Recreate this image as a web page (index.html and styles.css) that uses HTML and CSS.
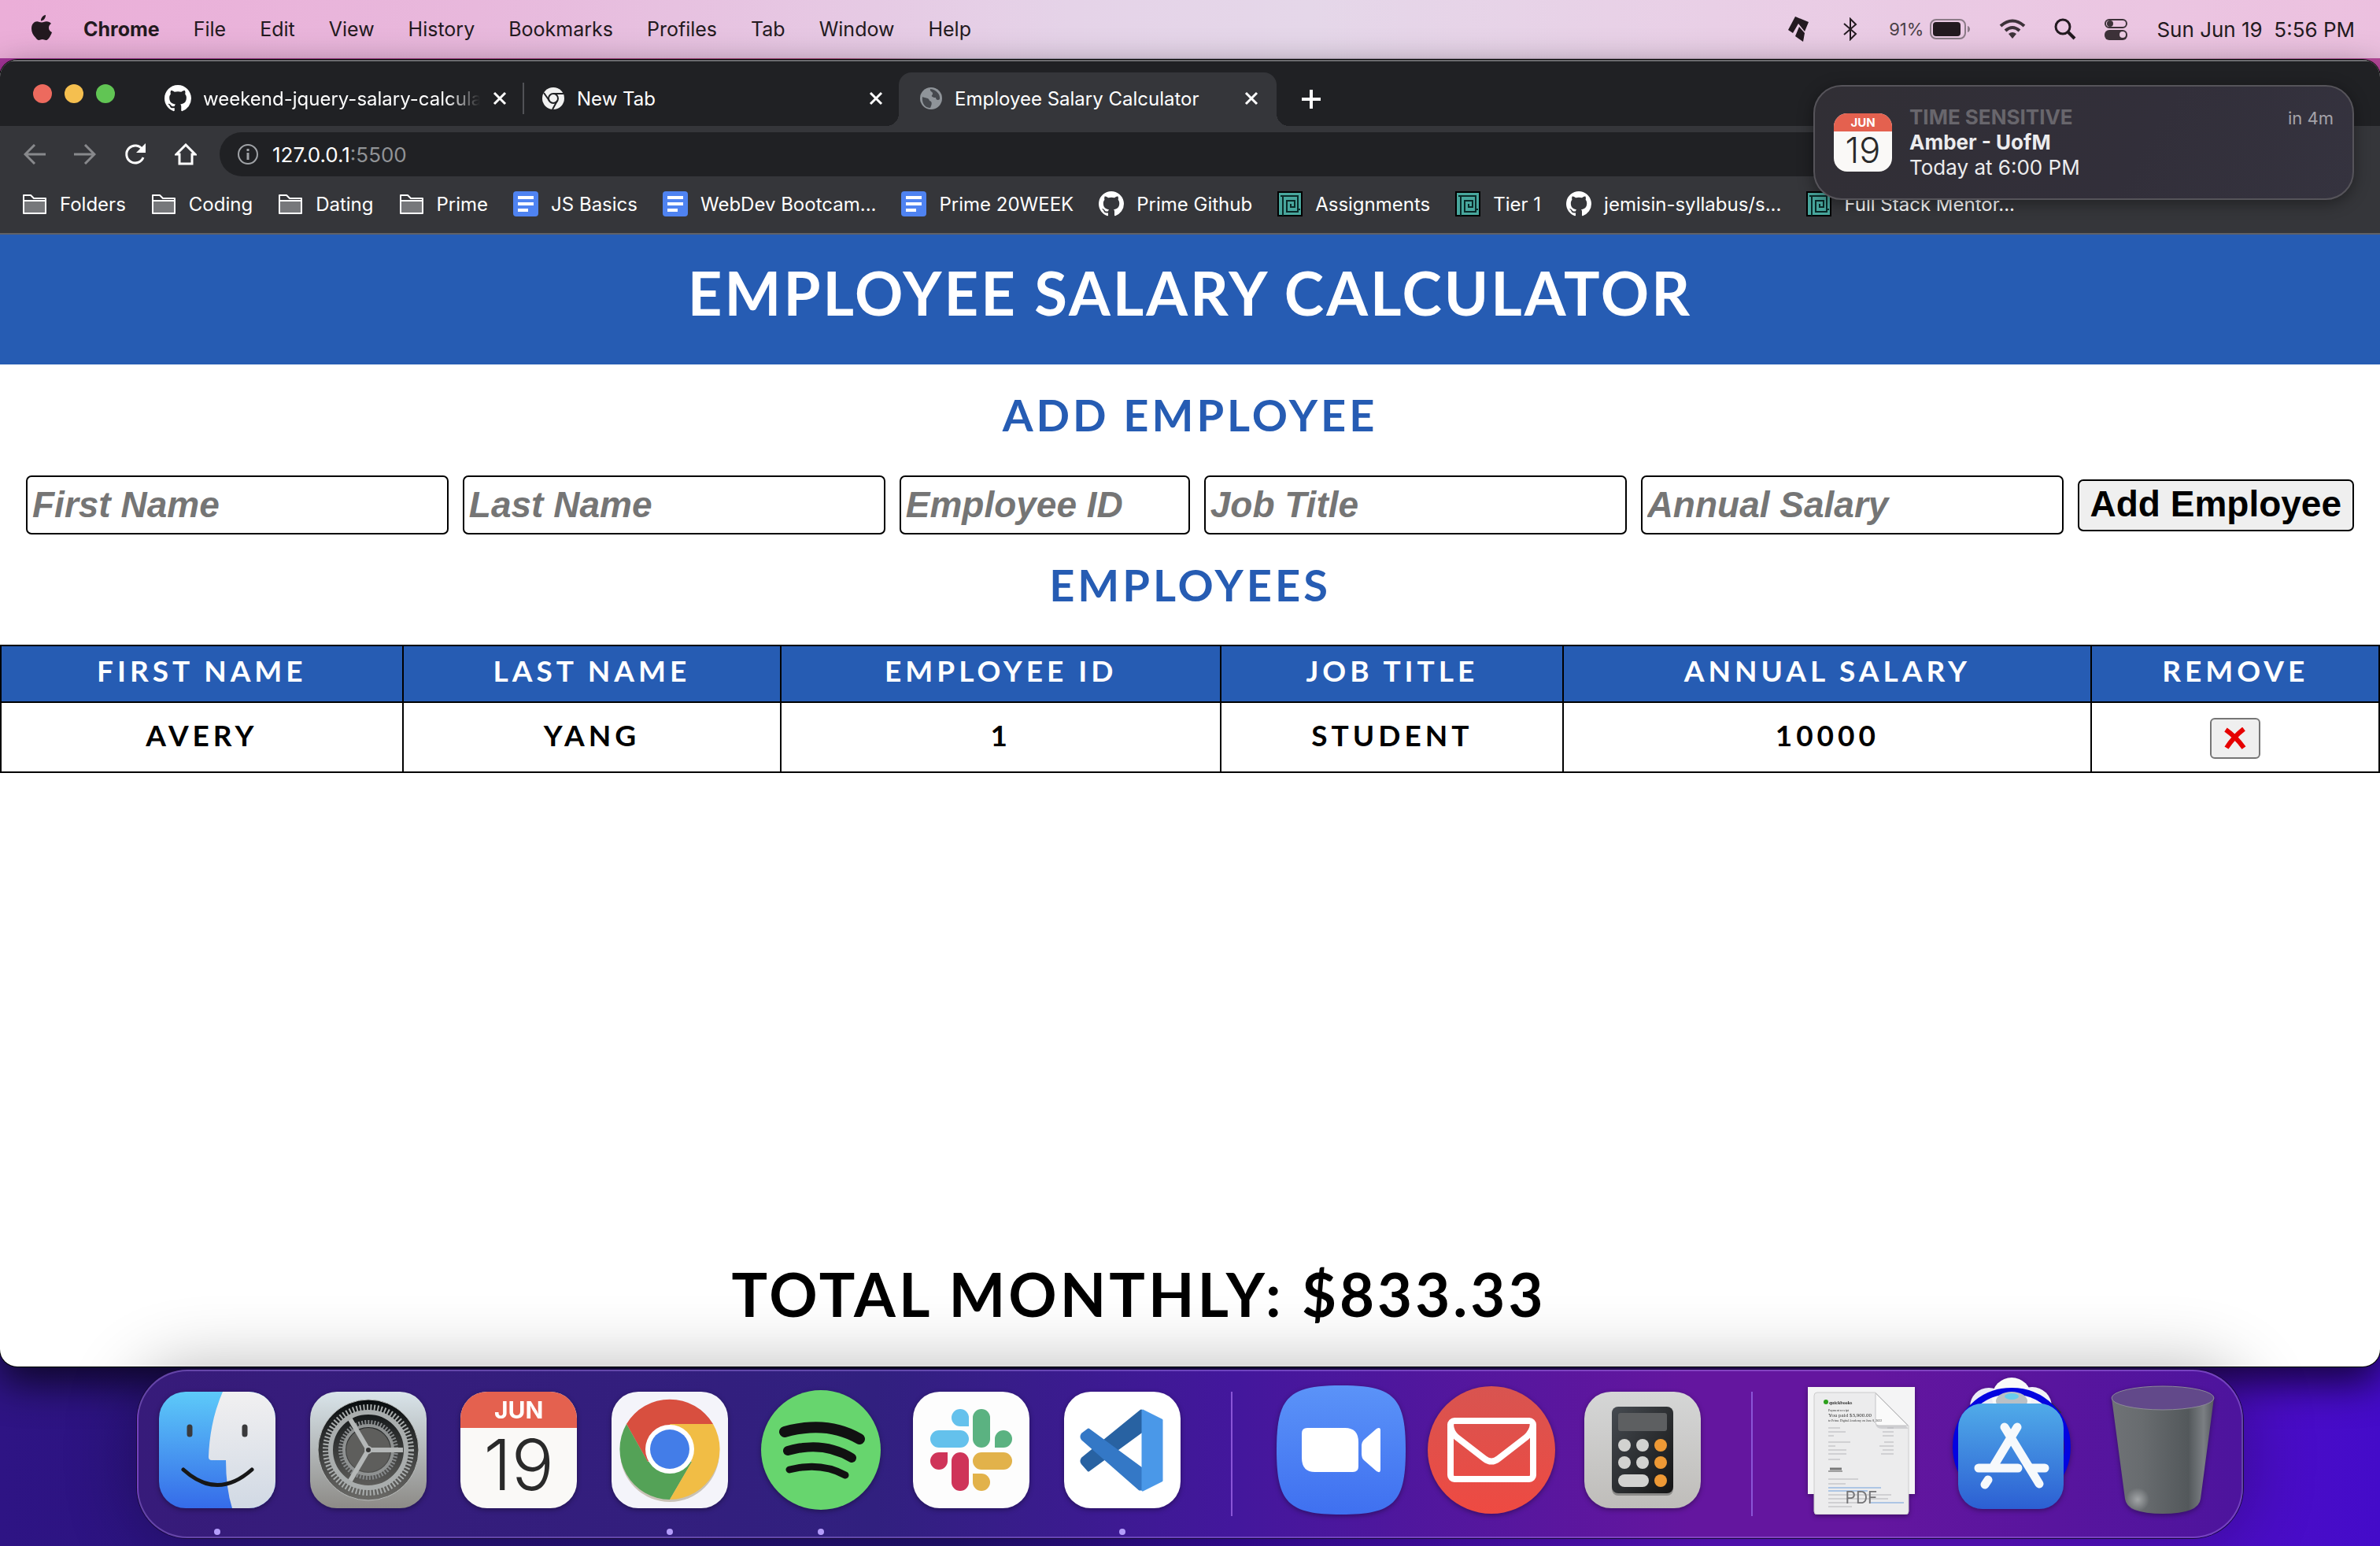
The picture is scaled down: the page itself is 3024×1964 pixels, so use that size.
FILE: index.html
```html
<!DOCTYPE html>
<html lang="en">
<head>
<meta charset="utf-8">
<title>Employee Salary Calculator</title>
<link rel="stylesheet" href="styles.css">
</head>
<body>
<svg class="defs" aria-hidden="true">
  <symbol id="github" viewBox="0 0 16 16"><path fill="#fff" d="M8 0C3.58 0 0 3.58 0 8c0 3.54 2.29 6.53 5.47 7.59.4.07.55-.17.55-.38 0-.19-.01-.82-.01-1.49-2.01.37-2.53-.49-2.69-.94-.09-.23-.48-.94-.82-1.13-.28-.15-.68-.52-.01-.53.63-.01 1.08.58 1.23.82.72 1.21 1.87.87 2.33.66.07-.52.28-.87.51-1.07-1.78-.2-3.64-.89-3.64-3.95 0-.87.31-1.59.82-2.15-.08-.2-.36-1.02.08-2.12 0 0 .67-.21 2.2.82.64-.18 1.32-.27 2-.27s1.36.09 2 .27c1.53-1.04 2.2-.82 2.2-.82.44 1.1.16 1.92.08 2.12.51.56.82 1.27.82 2.15 0 3.07-1.87 3.75-3.65 3.95.29.25.54.73.54 1.48 0 1.07-.01 1.93-.01 2.2 0 .21.15.46.55.38A8.01 8.01 0 0 0 16 8c0-4.42-3.58-8-8-8z"/></symbol>
  <symbol id="folder" viewBox="0 0 32 32"><path d="M2 5h9l4 4h15v19H2z" fill="#35363a" stroke="#fff" stroke-width="2" stroke-linejoin="round"/><path d="M3 12h26v15H3z" fill="#77787b"/><path d="M2 12h28" stroke="#fff" stroke-width="2"/></symbol>
  <symbol id="doc" viewBox="0 0 32 32"><rect width="32" height="32" rx="4" fill="#4f83f1"/><path d="M6 8h20M6 16h20M6 24h13" stroke="#fff" stroke-width="4"/></symbol>
  <symbol id="maze" viewBox="0 0 32 32"><rect x="1" y="1" width="30" height="30" fill="#48a79d" stroke="#000" stroke-width="2"/><path d="M7 31V6h19v20H12V12h10v8h-5v-4M4 6h3M26 23h3" fill="none" stroke="#0a2a28" stroke-width="2"/></symbol>
  <symbol id="close" viewBox="0 0 18 18"><path d="M2 2l14 14M16 2L2 16" stroke="#fff" stroke-width="3"/></symbol>
</svg>

<header class="menubar">
  <svg class="apple" viewBox="0 0 26 32"><path fill="#231a20" d="M18 0c.2 2-.6 3.900-1.700 5.300-1.200 1.400-2.700 2.300-4.300 2.200-.2-2 .7-3.900 1.700-5.100C14.900 1 16.600.1 18 0zM25 11c-1.900 1.200-3 2.900-3 5.300 0 2.700 1.500 4.700 4 5.600-.9 2.700-2.100 5.100-3.900 7.500-1.100 1.500-2.200 2.600-3.900 2.600-1.600 0-2.200-1-4.400-1-2.100 0-2.900 1-4.400 1-1.700 0-3-1.500-4.200-3.200C1.500 25.500-.4 20.500.1 15.800.5 11.400 3.500 8.300 7.100 8.200c2 0 3.700 1.300 6 1.300 1.500 0 3.400-1.400 6.200-1.300 2.200.1 4.300 1 5.700 2.800z"/></svg>
  <nav class="menus">
    <strong>Chrome</strong><span>File</span><span>Edit</span><span>View</span><span>History</span><span>Bookmarks</span><span>Profiles</span><span>Tab</span><span>Window</span><span>Help</span>
  </nav>
  <div class="status">
    <svg width="26" height="32" viewBox="0 0 26 32" fill="#231a20"><path d="M9 0l17 7-5 12-8-10-7 12-6-4z"/><path d="M14 13l7 8-2 11-10-7z"/></svg>
    <svg class="bluetooth" width="18" height="30" viewBox="0 0 18 30" fill="none" stroke="#231a20" stroke-width="2"><path d="M1 8l15 13-7 7V2l7 7L1 22"/></svg>
    <span class="battery"><small>91%</small>
      <svg width="52" height="26" viewBox="0 0 52 26"><rect x="1" y="1" width="44" height="24" rx="7" fill="none" stroke="#8c7b88" stroke-width="2"/><rect x="4" y="4" width="35" height="18" rx="4" fill="#231a20"/><path d="M48 9c4 1 4 7 0 8z" fill="#8c7b88"/></svg></span>
    <svg width="34" height="26" viewBox="0 0 34 26" fill="none" stroke="#3d3239" stroke-width="4"><path d="M2 9q15-13 30 0M8 15q9-8 18 0"/><path d="M17 25l-5-6q5-4 10 0z" fill="#3d3239" stroke="none"/></svg>
    <svg width="28" height="28" viewBox="0 0 28 28" fill="none" stroke="#231a20" stroke-width="3"><circle cx="11" cy="11" r="9"/><path d="M18 18l8 8" stroke-width="4"/></svg>
    <svg width="30" height="28" viewBox="0 0 30 28"><rect x="1" y="2" width="27" height="10" rx="5" fill="none" stroke="#3d3239" stroke-width="2"/><circle cx="7" cy="7" r="4" fill="#3d3239"/><rect y="15" width="29" height="13" rx="6" fill="#3d3239"/><circle cx="23" cy="21" r="4" fill="#ebcbe2"/></svg>
    <time>Sun Jun 19&nbsp; 5:56 PM</time>
  </div>
</header>

<main class="window">
  <div class="tabs">
    <div class="lights"><i class="red"></i><i class="amber"></i><i class="green"></i></div>
    <div class="tab tab-first">
      <svg width="34" height="34"><use href="#github"/></svg>
      <span class="tab-title fade">weekend-jquery-salary-calcula</span>
      <button class="plain" aria-label="Close"><svg width="18" height="18"><use href="#close"/></svg></button>
    </div>
    <div class="tab tab-second">
      <svg width="30" height="30" viewBox="0 0 30 30"><circle cx="15" cy="15" r="14" fill="#f1f1f1"/><g fill="none" stroke="#202124" stroke-width="2"><circle cx="15" cy="15" r="6"/><path d="M15 9h13M10 18L3 8M20 18l-6 11"/></g></svg>
      <span class="tab-title">New Tab</span>
      <button class="plain" aria-label="Close"><svg width="18" height="18"><use href="#close"/></svg></button>
    </div>
    <div class="tab active">
      <svg width="30" height="30" viewBox="0 0 30 30"><circle cx="15" cy="15" r="14" fill="#8f9499"/><path d="M4 13c5 2 8 1 9 5 4 1 3 5 1 9C7 27 3 21 4 13zM14 3c-1 4 4 3 3 7-3 2 0 4 4 4 0 3 3 4 5 2 1-6-4-12-12-13z" fill="#45484d"/></svg>
      <span class="tab-title">Employee Salary Calculator</span>
      <button class="plain" aria-label="Close"><svg width="18" height="18"><use href="#close"/></svg></button>
    </div>
    <button class="plain new-tab" aria-label="New tab"><svg width="24" height="24" viewBox="0 0 24 24"><path d="M12 0v24M0 12h24" stroke="#fff" stroke-width="4"/></svg></button>
  </div>

  <div class="toolbar">
    <button class="plain" aria-label="Back"><svg width="28" height="26" viewBox="0 0 28 26" fill="none" stroke="#88898c" stroke-width="3"><path d="M28 13H3M14 1L2 13l12 12"/></svg></button>
    <button class="plain" aria-label="Forward"><svg width="28" height="26" viewBox="0 0 28 26" fill="none" stroke="#88898c" stroke-width="3"><path d="M0 13h25M14 1l12 12-12 12"/></svg></button>
    <button class="plain" aria-label="Reload"><svg width="28" height="28" viewBox="0 0 28 28"><path d="M24 18a11 11 0 1 1-1-10" fill="none" stroke="#fff" stroke-width="3"/><path d="M27 0v12H15z" fill="#fff"/></svg></button>
    <button class="plain" aria-label="Home"><svg width="28" height="28" viewBox="0 0 28 28"><path d="M6 26V14H2L14 2l12 12h-4v12z" fill="none" stroke="#fff" stroke-width="3"/></svg></button>
    <div class="address">
      <svg width="28" height="28" viewBox="0 0 28 28" fill="none" stroke="#a0a3a7" stroke-width="2"><circle cx="14" cy="14" r="12"/><path d="M14 12v9M14 7v3" stroke-width="3"/></svg>
      <span class="url">127.0.0.1<span>:5500</span></span>
    </div>
  </div>

  <nav class="bookmarks">
    <a href="#"><svg><use href="#folder"/></svg>Folders</a>
    <a href="#"><svg><use href="#folder"/></svg>Coding</a>
    <a href="#"><svg><use href="#folder"/></svg>Dating</a>
    <a href="#"><svg><use href="#folder"/></svg>Prime</a>
    <a href="#"><svg><use href="#doc"/></svg>JS Basics</a>
    <a href="#"><svg><use href="#doc"/></svg>WebDev Bootcam...</a>
    <a href="#"><svg><use href="#doc"/></svg>Prime 20WEEK</a>
    <a href="#"><svg><use href="#github"/></svg>Prime Github</a>
    <a href="#"><svg><use href="#maze"/></svg>Assignments</a>
    <a href="#"><svg><use href="#maze"/></svg>Tier 1</a>
    <a href="#"><svg><use href="#github"/></svg>jemisin-syllabus/s...</a>
    <a href="#"><svg><use href="#maze"/></svg>Full Stack Mentor...</a>
  </nav>

  <section class="page">
    <h1>EMPLOYEE SALARY CALCULATOR</h1>
    <h2>ADD EMPLOYEE</h2>
    <form class="employee-form">
      <input type="text" placeholder="First Name" aria-label="First Name">
      <input type="text" placeholder="Last Name" aria-label="Last Name">
      <input class="short" type="text" placeholder="Employee ID" aria-label="Employee ID">
      <input type="text" placeholder="Job Title" aria-label="Job Title">
      <input type="text" placeholder="Annual Salary" aria-label="Annual Salary">
      <button type="button">Add Employee</button>
    </form>
    <h2>EMPLOYEES</h2>
    <table>
      <colgroup><col class="c1"><col class="c2"><col class="c3"><col class="c4"><col class="c5"><col class="c6"></colgroup>
      <thead><tr><th>FIRST NAME</th><th>LAST NAME</th><th>EMPLOYEE ID</th><th>JOB TITLE</th><th>ANNUAL SALARY</th><th>REMOVE</th></tr></thead>
      <tbody><tr><td>AVERY</td><td>YANG</td><td>1</td><td>STUDENT</td><td>10000</td>
        <td><button type="button" class="remove" aria-label="Remove"><svg width="28" height="28" viewBox="0 0 28 28"><path d="M2 3q13 9 23 23M25 2Q12 12 3 26" fill="none" stroke="#e60000" stroke-width="6"/></svg></button></td></tr></tbody>
    </table>
    <p class="total">TOTAL MONTHLY: $833.33</p>
  </section>

  <aside class="notice">
    <div class="calendar small"><b>JUN</b><span>19</span></div>
    <div class="notice-text">
      <b class="muted">TIME SENSITIVE</b>
      <b>Amber - UofM</b>
      <span>Today at 6:00 PM</span>
    </div>
    <span class="when">in 4m</span>
  </aside>
</main>

<footer class="dock">
  <div class="app running"><svg width="148" height="148" viewBox="0 0 148 148">
    <defs><linearGradient id="fb" x2="0" y2="1"><stop stop-color="#5dcaf9"/><stop offset="1" stop-color="#356be9"/></linearGradient><linearGradient id="fw" x2="0" y2="1"><stop stop-color="#f1f0f1"/><stop offset="1" stop-color="#d1d9e4"/></linearGradient><clipPath id="fc"><rect width="148" height="148" rx="34"/></clipPath></defs>
    <g clip-path="url(#fc)"><rect width="148" height="148" fill="url(#fb)"/><path d="M81 0C68 30 64 58 63 83q0 4 4 4h18q0 36 8 61h55V0z" fill="url(#fw)"/></g>
    <path d="M39 45v9M109 45v9" stroke="#3a3a3c" stroke-width="7" stroke-linecap="round"/><path d="M31 99q43 39 87 0" fill="none" stroke="#171717" stroke-width="5" stroke-linecap="round"/></svg></div>

  <div class="app"><svg width="148" height="148" viewBox="0 0 148 148">
    <defs><linearGradient id="sg" x2="0" y2="1"><stop stop-color="#d9e4ea"/><stop offset="1" stop-color="#8d8b87"/></linearGradient><linearGradient id="sd" x2="0" y2="1"><stop stop-color="#070b0d"/><stop offset="1" stop-color="#6b6a67"/></linearGradient></defs>
    <rect width="148" height="148" rx="34" fill="url(#sg)"/><circle cx="74" cy="74" r="64" fill="url(#sd)" stroke="#b9bcbb"/>
    <g fill="none" stroke="#a9adad"><circle cx="74" cy="74" r="54" stroke-width="8" stroke-dasharray="2 2.500"/><circle cx="74" cy="74" r="48" stroke-width="6"/><circle cx="74" cy="74" r="35" stroke="#85888a" stroke-width="6" stroke-dasharray="2 2"/><circle cx="74" cy="74" r="31" stroke="#8f9292" stroke-width="4"/></g>
    <circle cx="74" cy="74" r="28" fill="#5e5e5c"/><path d="M74 74h44M74 74L51 35M74 74l-23 39" stroke="#b4b7b7" stroke-width="6"/><circle cx="74" cy="74" r="5" fill="#b4b7b7"/><circle cx="74" cy="74" r="3" fill="#333"/></svg></div>

  <div class="app"><div class="calendar"><b>JUN</b><span>19</span></div></div>

  <div class="app running"><svg width="148" height="148" viewBox="0 0 148 148"><rect width="148" height="148" rx="34" fill="#f4f4fa"/>
    <circle cx="74" cy="77" r="63" fill="#c9c2b6"/>
    <path d="M19 41A64 64 0 0 1 129 41L74 60 46 89z" fill="#d84f3f"/><path d="M19 41l27 48 56 0-28 48A64 64 0 0 1 19 41z" fill="#54a257"/><path d="M129 41A64 64 0 0 1 74 137l28-48L74 41z" fill="#f1bd45"/><circle cx="74" cy="73" r="31" fill="#fff"/><circle cx="74" cy="73" r="25" fill="#437de8"/></svg></div>

  <div class="app running"><svg width="152" height="152" viewBox="0 0 152 152"><circle cx="76" cy="76" r="76" fill="#67d56e"/><g fill="none" stroke="#111" stroke-linecap="round"><path d="M30 53q54-15 95 9" stroke-width="14"/><path d="M34 77q45-13 81 9" stroke-width="12"/><path d="M36 101q40-10 71 7" stroke-width="9"/></g></svg></div>

  <div class="app"><svg width="148" height="148" viewBox="0 0 148 148"><rect width="148" height="148" rx="34" fill="#fdfdfd"/>
    <g fill="#64c1ec"><rect x="22" y="49" width="49" height="22" rx="11"/><path d="M71 44H60a11 11 0 1 1 11-11z"/></g><g fill="#5bb281"><rect x="76" y="22" width="22" height="49" rx="11"/><path d="M104 71V60a11 11 0 1 1 11 11z"/></g>
    <g fill="#cf3459"><rect x="49" y="77" width="22" height="49" rx="11"/><path d="M44 77v11a11 11 0 1 1-11-11z"/></g><g fill="#e2b24a"><rect x="76" y="77" width="50" height="22" rx="11"/><path d="M76 104h11a11 11 0 1 1-11 11z"/></g></svg></div>

  <div class="app running"><svg width="148" height="148" viewBox="0 0 148 148"><rect width="148" height="148" rx="34" fill="#fff"/><g stroke-width="3" stroke-linejoin="round"><path d="M98 24v27L31 100l-8-9q-2-3 0-6z" fill="#2862a2" stroke="#2862a2"/><path d="M31 48l68 50v26h-3L23 60q-2-3 0-6z" fill="#3478c6" stroke="#3478c6"/><path d="M100 24l24 12v77l-24 12z" fill="#4a98e8" stroke="#4a98e8"/></g></svg></div>

  <i class="divider"></i>

  <div class="app"><svg width="164" height="164" viewBox="0 0 164 164"><defs><linearGradient id="zg" x2="0" y2="1"><stop stop-color="#5b93f8"/><stop offset="1" stop-color="#3f70f0"/></linearGradient></defs><path d="M82 0c67 0 82 15 82 82s-15 82-82 82S0 149 0 82 15 0 82 0z" fill="url(#zg)"/><path d="M39 54h48q17 0 17 18v31q0 7-7 7H49q-17 0-17-18V61q0-7 7-7zM111 69l16-14q5-3 5 2v50q0 5-5 2l-16-14q-3-3-3-8V77q0-5 3-8z" fill="#fff"/></svg></div>

  <div class="app"><svg width="162" height="162" viewBox="0 0 162 162"><defs><linearGradient id="mg" x2="0" y2="1"><stop stop-color="#d85450"/><stop offset="1" stop-color="#ee4a42"/></linearGradient></defs><circle cx="81" cy="81" r="81" fill="url(#mg)"/><g fill="none" stroke="#fff" stroke-width="8"><rect x="29" y="44" width="105" height="74" rx="5"/><path d="M29 48q0 10 8 17l35 27q9 7 18 0l35-27q8-7 9-17"/></g></svg></div>

  <div class="app"><svg width="148" height="148" viewBox="0 0 148 148"><defs><linearGradient id="cg" x2="0" y2="1"><stop stop-color="#d5d6d6"/><stop offset="1" stop-color="#bfbdba"/></linearGradient><linearGradient id="cb" x2="1" y2="1"><stop stop-color="#464b51"/><stop offset="1" stop-color="#141414"/></linearGradient></defs><rect width="148" height="148" rx="34" fill="url(#cg)"/><rect x="35" y="20" width="78" height="112" rx="8" fill="#8b8a88"/><rect x="35" y="19" width="78" height="110" rx="8" fill="url(#cb)"/><rect x="43" y="27" width="62" height="23" rx="3" fill="#5d5f61"/><g fill="#d2d2d0"><circle cx="51" cy="68" r="8"/><circle cx="74" cy="68" r="8"/><circle cx="51" cy="90" r="8"/><circle cx="74" cy="90" r="8"/><rect x="43" y="105" width="39" height="16" rx="8"/></g><g fill="#ee9935"><circle cx="97" cy="68" r="8"/><circle cx="97" cy="90" r="8"/><circle cx="97" cy="113" r="8"/></g></svg></div>

  <i class="divider"></i>

  <div class="app"><svg width="136" height="164" viewBox="0 -2 136 164"><path d="M0 0h136v136H0z" fill="#f4f4f5"/><path d="M12 7h74l42 42v109q0 4-4 4H12q-4 0-4-4V11q0-4 4-4z" fill="#ececed" stroke="#ccc"/><path d="M86 12v33q0 8 8 8h34z" fill="#cfcfd2"/><path d="M86 8v37q0 4 4 4h37z" fill="#fafafa" stroke="#c4c4c6"/>
    <circle cx="23" cy="19" r="3" fill="#2ca01c"/>
    <g font-family="Liberation Serif, serif" fill="#333"><text x="27" y="22" font-size="6" font-weight="bold">quickbooks</text><text x="26" y="31" font-size="4">Payment receipt</text><text x="26" y="38" font-size="7">You paid $3,900.00</text><text x="26" y="44" font-size="4">to Prime Digital Academy on June 8, 2022</text></g>
    <g stroke="#b4b4b8" stroke-width="1"><path d="M26 52h15M26 57h22M26 62h7M26 70h28M26 75h9M26 80h23M26 85h23M26 92h15M101 52h8M95 57h14M95 62h14M97 70h12M91 75h18M95 80h14M93 85h16M26 117h38M26 123h22M26 137h80M26 142h76M26 147h40M26 152h30"/><path d="M26 128h67M26 132h50M80 147h42" stroke="#6f9fdc"/></g><path d="M28 104h15" stroke="#777" stroke-width="3"/><path d="M26 107h18" stroke="#555"/>
    <text x="68" y="148" text-anchor="middle" font-family="Inter, sans-serif" font-size="21" fill="#747477">PDF</text></svg></div>

  <div class="app"><svg class="store" width="150" height="168" viewBox="0 0 150 168"><defs><linearGradient id="ag" x2="0" y2="1"><stop stop-color="#50abe9"/><stop offset="1" stop-color="#2c5fd3"/></linearGradient></defs><circle cx="46" cy="37" r="24" fill="#ececf6"/><circle cx="101" cy="37" r="25" fill="#f2f2f7"/><circle cx="75" cy="25" r="25" fill="#fafafa"/><path d="M126 32l12 12-6 10-14-12z" fill="#333"/><circle cx="75" cy="88" r="71" fill="none" stroke="#0404e0" stroke-width="8"/><ellipse cx="75" cy="30" rx="20" ry="12" fill="#b9c0c6"/><ellipse cx="75" cy="24" rx="9" ry="4" fill="#69ccec"/><rect x="7" y="33" width="134" height="134" rx="31" fill="url(#ag)"/><g stroke="#f6f9fc" stroke-width="11" stroke-linecap="round"><path d="M66 63l44 72M82 63l-29 48M33 115h50M101 115h16M45 130l-4 6"/></g></svg></div>

  <div class="app"><svg width="132" height="164" viewBox="0 0 132 164"><defs><linearGradient id="tg"><stop stop-color="#6f7276"/><stop offset=".3" stop-color="#686c6f"/><stop offset=".75" stop-color="#53585b"/><stop offset=".9" stop-color="#7b7f83"/><stop offset="1" stop-color="#55585e"/></linearGradient><radialGradient id="ts"><stop stop-color="#a2a5a7"/><stop offset="1" stop-color="#a2a5a7" stop-opacity="0"/></radialGradient></defs><path d="M1 16l17 128q2 19 48 19t48-19l17-128z" fill="url(#tg)"/><circle cx="34" cy="145" r="15" fill="url(#ts)"/><ellipse cx="66" cy="16" rx="65" ry="15" fill="#62498a" stroke="#8c8a98"/></svg></div>
</footer>
</body>
</html>
```
FILE: styles.css
```css
* { box-sizing: border-box; }

body {
  margin: 0;
  min-height: 100vh;
  display: flex;
  flex-direction: column;
  font-family: Inter, "Liberation Sans", sans-serif;
  font-size: 24px;
  background:
    linear-gradient(90deg, #a5359a, #b54a80 35%, #a9a4b8 40%, #c8a6bd 90%, #b8489c) top / 100% 140px no-repeat,
    linear-gradient(90deg, #2e1484, #211070 40%, #350a9a 52%, #5a12c4 72%, #5a12c4 84%, #440bc9);
}

.defs { position: absolute; width: 0; height: 0; }
svg { display: block; flex: none; }
.plain { padding: 0; border: 0; background: none; display: flex; }

/* Menu bar */
.menubar {
  height: 74px;
  padding: 0 32px 0 40px;
  display: flex;
  align-items: center;
  color: #231a20;
  background: linear-gradient(90deg, #ebaed8, #e8b8dc 20%, #e5d3e8 45%, #e5d7e9 55%, #e9cfe6 72%, #ecc0df);
  font-size: 25px;
}
.apple { width: 26px; height: 32px; margin: 0 40px 4px 0; }
.menus { display: flex; gap: 43px; }
.status { margin-left: auto; display: flex; align-items: center; gap: 36px; }
.status time { font-size: 26px; }
.bluetooth { margin: 0 4px 0 8px; }
.battery { display: flex; align-items: center; gap: 8px; }
.battery small { font-size: 22px; color: #4b3f47; }

/* Browser window */
.window {
  position: relative;
  flex: 1;
  margin-top: 2px;
  display: flex;
  flex-direction: column;
  border-radius: 22px;
  background: #fff;
  overflow: hidden;
  box-shadow: 0 0 0 1px #000, 0 20px 50px rgba(0, 0, 0, .7);
  color: #fff;
}
.tabs {
  height: 84px;
  padding: 14px 0 0 42px;
  display: flex;
  align-items: stretch;
  background: #202124;
  border-top: 2px solid #6b6b6e;
}
.lights { display: flex; gap: 16px; padding-top: 15px; }
.lights i { width: 24px; height: 24px; border-radius: 50%; }
.red { background: #ed6a5e; }
.amber { background: #f5bf4f; }
.green { background: #61c554; }
.tab { position: relative; display: flex; align-items: center; gap: 15px; padding-bottom: 2px; }
.tab .plain { margin-left: auto; }
.tab-first { width: 457px; margin-left: 63px; padding-right: 22px; }
.tab-first::after {
  content: "";
  position: absolute;
  right: 0;
  width: 2px;
  height: 40px;
  background: #515256;
}
.tab-second { width: 476px; padding-left: 22px; padding-right: 20px; }
.tab-title { white-space: nowrap; }
.fade {
  width: 352px;
  -webkit-mask-image: linear-gradient(90deg, #000 88%, transparent);
  mask-image: linear-gradient(90deg, #000 88%, transparent);
}
.active {
  width: 480px;
  padding-left: 26px;
  padding-right: 23px;
  border-radius: 16px 16px 0 0;
  background: #35363a;
}
.active::before, .active::after {
  content: "";
  position: absolute;
  bottom: 0;
  width: 16px;
  height: 16px;
}
.active::before { left: -16px; background: radial-gradient(circle at 0 0, transparent 16px, #35363a 16px); }
.active::after { right: -16px; background: radial-gradient(circle at 100% 0, transparent 16px, #35363a 16px); }
.new-tab { margin-left: 32px; align-items: center; }

.toolbar {
  height: 72px;
  padding: 8px 320px 8px 30px;
  display: flex;
  align-items: center;
  gap: 36px;
  background: #35363a;
}
.address {
  flex: 1;
  height: 56px;
  margin-left: -7px;
  padding-left: 22px;
  display: flex;
  align-items: center;
  gap: 17px;
  border-radius: 28px;
  background: #202124;
  font-size: 26px;
}
.url span { color: #919396; }

.bookmarks {
  height: 66px;
  padding: 0 28px 10px;
  display: flex;
  align-items: center;
  gap: 32px;
  background: #35363a;
  border-bottom: 2px solid #606165;
}
.bookmarks a {
  display: flex;
  align-items: center;
  gap: 16px;
  color: #fff;
  text-decoration: none;
  white-space: nowrap;
}
.bookmarks svg { width: 32px; height: 32px; }

/* Salary calculator */
.page {
  flex: 1;
  display: flex;
  flex-direction: column;
  color: #000;
  font-family: Lato, sans-serif;
  font-weight: 700;
  text-align: center;
}
h1, h2, p { margin: 0; }
h1 {
  height: 165px;
  padding-top: 28px;
  color: #fff;
  background: #265cb3;
  font-size: 76px;
  line-height: 92px;
  letter-spacing: 3px;
}
h2 {
  padding: 32px 0;
  color: #265cb3;
  font-size: 56px;
  line-height: 64px;
  letter-spacing: 4px;
}
.employee-form {
  display: flex;
  align-items: center;
  gap: 18px;
  padding: 13px 33px 0;
}
.employee-form input {
  flex: 537 1 0;
  min-width: 0;
  height: 75px;
  padding: 0 6px 2px;
  border: 2px solid #000;
  border-radius: 7px;
  background: #fff;
  font: italic bold 46px "Liberation Sans", Arial, sans-serif;
}
.employee-form .short { flex-grow: 364; }
.employee-form input::placeholder { color: #757575; opacity: 1; }
.employee-form button {
  height: 66px;
  padding: 0 14px 3px;
  border: 2px solid #000;
  border-radius: 7px;
  background: #efefef;
  color: #000;
  font: bold 46px "Liberation Sans", Arial, sans-serif;
}

table {
  width: 100%;
  margin-top: 12px;
  table-layout: fixed;
  border-collapse: collapse;
  font-size: 37px;
  line-height: 48px;
  letter-spacing: 5px;
}
.c1 { width: 16.9%; }
.c2 { width: 15.9%; }
.c3 { width: 18.5%; }
.c4 { width: 14.4%; }
.c5 { width: 22.2%; }
th, td { padding: 0; border: 2px solid #000; }
th { height: 72px; padding-bottom: 8px; background: #265cb3; color: #fff; }
td { height: 89px; padding-bottom: 6px; }
td:last-child { padding-bottom: 0; }
.remove {
  width: 64px;
  height: 52px;
  padding: 0;
  display: inline-flex;
  align-items: center;
  justify-content: center;
  vertical-align: middle;
  border: 2px solid #767676;
  border-radius: 6px;
  background: #efefef;
}
.total {
  margin-top: auto;
  padding: 0 130px 46px 0;
  font-size: 76px;
  line-height: 92px;
  letter-spacing: 4px;
}

/* Calendar notification */
.notice {
  position: absolute;
  top: 32px;
  right: 33px;
  width: 687px;
  height: 146px;
  padding: 0 24px;
  display: flex;
  align-items: center;
  gap: 22px;
  border: 2px solid #56545a;
  border-radius: 36px;
  background: linear-gradient(120deg, #312f35, #322f3a 60%, #35333f);
  box-shadow: 0 4px 20px rgba(0, 0, 0, .4);
  color: #ececee;
  font-size: 26px;
  line-height: 32px;
}
.notice-text { display: flex; flex-direction: column; }
.muted { color: #68666c; }
.when { align-self: flex-start; margin: 24px 0 0 auto; color: #a5a3a9; font-size: 22px; }

.calendar {
  width: 148px;
  height: 148px;
  border-radius: 34px;
  overflow: hidden;
  background: #faf9f7;
  color: #2a2a2a;
  display: flex;
  flex-direction: column;
  text-align: center;
}
.calendar b { background: #e4614f; color: #fff; font-size: 30px; line-height: 46px; }
.calendar span { font-size: 90px; line-height: 94px; font-weight: 300; }
.calendar.small { width: 74px; height: 74px; border-radius: 17px; }
.small b { font-size: 15px; line-height: 23px; }
.small span { font-size: 45px; line-height: 47px; }

/* Dock */
.dock {
  position: relative;
  width: 100%;
  max-width: 2676px;
  margin: 4px auto 10px;
  height: 214px;
  padding: 0 4px;
  display: flex;
  align-items: center;
  border: 2px solid rgba(190, 150, 255, .35);
  border-radius: 64px;
  background: linear-gradient(90deg, #371b7a, #31207f 35%, #43179c 52%, #64169f 74%, #64169f 82%, #4d149d);
  box-shadow: 0 0 0 1px #170a3c, 0 0 90px rgba(0, 0, 0, .3);
}
.app {
  position: relative;
  flex: 1;
  height: 100%;
  padding-bottom: 10px;
  display: flex;
  align-items: center;
  justify-content: center;
}
.app > * { filter: drop-shadow(0 2px 3px rgba(0, 0, 0, .35)); }
.store { margin-bottom: 16px; }
.running::after {
  content: "";
  position: absolute;
  bottom: 2px;
  width: 8px;
  height: 8px;
  border-radius: 50%;
  background: #b49dfb;
}
.divider { width: 2px; height: 158px; margin: 0 42px; background: #8a55d6; }
```
